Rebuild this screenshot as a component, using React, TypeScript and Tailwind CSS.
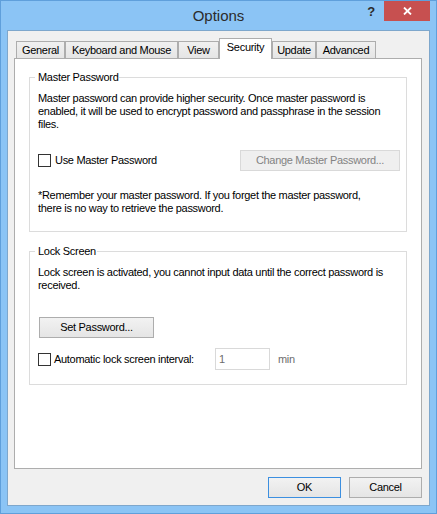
import React, { useState } from "react";

const tabs = [
    { name: "General", w: "w-[49px]" },
    { name: "Keyboard and Mouse", w: "w-[113px]" },
    { name: "View", w: "w-[41px]" },
    { name: "Security", w: "w-[53px]" },
    { name: "Update", w: "w-[44px]" },
    { name: "Advanced", w: "w-[60px]" },
];

const CheckBox: React.FC<{ checked: boolean; onChange: () => void }> = ({ checked, onChange }) => (
    <button
        type="button"
        onClick={onChange}
        className="flex h-[13px] w-[13px] shrink-0 items-center justify-center border border-[#333333] bg-white"
    >
        {checked && (
            <svg width="9" height="9" viewBox="0 0 9 9">
                <path d="M1 4.5 L3.5 7 L8 1.5" fill="none" stroke="#333" strokeWidth="1.5" />
            </svg>
        )}
    </button>
);

export default function App() {
    const [activeTab, setActiveTab] = useState("Security");
    const [useMaster, setUseMaster] = useState(false);
    const [autoLock, setAutoLock] = useState(false);
    const [interval, setInterval] = useState("1");

    return (
        <div className="flex h-[514px] w-[437px] flex-col border border-[#5f9fdb] bg-[#8bc4f5] font-['Liberation_Sans',Arial,sans-serif] text-[11px] leading-[13px] tracking-[-0.3px] text-black">
            {/* title bar */}
            <div className="grid h-[29px] shrink-0 grid-cols-[1fr_auto_1fr]">
                <div />
                <div className="flex items-center pb-px text-[15px] tracking-normal text-[#2b2b2b]">Options</div>
                <div className="flex items-start justify-end pr-[6px]">
                    <span className="mr-[4px] mt-[4px] w-[18px] text-center text-[13px] font-bold leading-[13px] text-[#2b2b2b]">?</span>
                    <button type="button" className="flex h-[20px] w-[46px] items-center justify-center bg-[#c75050]">
                        <svg width="9" height="8" viewBox="0 0 9 8">
                            <path d="M1 0.5 L8 7.5 M8 0.5 L1 7.5" stroke="white" strokeWidth="1.8" />
                        </svg>
                    </button>
                </div>
            </div>

            {/* client */}
            <div className="mx-[6px] mb-[7px] flex flex-1 flex-col border border-[#7ea7cc] bg-[#f0f0f0] pb-[7px] pl-[6px] pr-[7px] pt-[7px]">
                <div className="flex h-[20px] items-end pl-[2px]">
                    {tabs.map(t =>
                        t.name === activeTab ? (
                            <div
                                key={t.name}
                                className={`${t.w} relative z-10 -mb-px flex h-[21px] items-start justify-center border border-b-0 border-[#adadad] bg-white pt-[2px] whitespace-nowrap`}
                            >
                                {t.name}
                            </div>
                        ) : (
                            <button
                                key={t.name}
                                type="button"
                                onClick={() => setActiveTab(t.name)}
                                className={`${t.w} flex h-[17px] items-center justify-center border border-b-0 border-[#adadad] bg-linear-to-b from-[#f0f0f0] to-[#e5e5e5] pt-px whitespace-nowrap`}
                            >
                                {t.name}
                            </button>
                        )
                    )}
                </div>

                <div className="flex-1 border border-[#adadad] bg-white px-[14px] pt-[11px]">
                    <fieldset className="border border-[#dcdcdc] pb-[16px] pl-[8px] pr-[6px]">
                        <legend className="-ml-[3px] pl-[3px] pr-[1px] leading-[14px]">Master Password</legend>
                        <p className="mt-[8px] whitespace-nowrap">
                            Master password can provide higher security. Once master password is
                            <br />
                            enabled, it will be used to encrypt password and passphrase in the session
                            <br />
                            files.
                        </p>
                        <div className="mt-[19px] flex h-[21px] items-center">
                            <CheckBox checked={useMaster} onChange={() => setUseMaster(!useMaster)} />
                            <span className="ml-[4px]">Use Master Password</span>
                            <button
                                type="button"
                                disabled={!useMaster}
                                className="ml-auto h-[21px] w-[160px] border border-[#d9d9d9] bg-[#efefef] text-[#838383]"
                            >
                                Change Master Password...
                            </button>
                        </div>
                        <p className="mt-[18px] whitespace-nowrap">
                            *Remember your master password. If you forget the master password,
                            <br />
                            there is no way to retrieve the password.
                        </p>
                    </fieldset>

                    <fieldset className="mt-[12px] border border-[#dcdcdc] pb-[14px] pl-[8px] pr-[6px]">
                        <legend className="-ml-[3px] pl-[3px] pr-[1px] leading-[14px]">Lock Screen</legend>
                        <p className="mt-[8px] whitespace-nowrap">
                            Lock screen is activated, you cannot input data until the correct password is
                            <br />
                            received.
                        </p>
                        <button
                            type="button"
                            className="ml-px mt-[25px] block h-[21px] w-[115px] border border-[#adadad] bg-linear-to-b from-[#f2f2f2] to-[#e5e5e5]"
                        >
                            Set Password...
                        </button>
                        <div className="mt-[10px] flex h-[22px] items-center">
                            <CheckBox checked={autoLock} onChange={() => setAutoLock(!autoLock)} />
                            <span className="ml-[3px] w-[161px] whitespace-nowrap">Automatic lock screen interval:</span>
                            <input
                                value={interval}
                                disabled={!autoLock}
                                onChange={e => setInterval(e.target.value)}
                                className="h-[22px] w-[55px] border border-[#d9d9d9] bg-white pl-[3px] text-[#6d6d6d] outline-none"
                            />
                            <span className="ml-[8px] text-[#6d6d6d]">min</span>
                        </div>
                    </fieldset>
                </div>

                <div className="mt-[8px] flex justify-end gap-[8px]">
                    <button
                        type="button"
                        className="h-[21px] w-[73px] border border-[#3c8fe0] bg-linear-to-b from-[#f2f2f2] to-[#e5e5e5]"
                    >
                        OK
                    </button>
                    <button
                        type="button"
                        className="h-[21px] w-[73px] border border-[#adadad] bg-linear-to-b from-[#f2f2f2] to-[#e5e5e5]"
                    >
                        Cancel
                    </button>
                </div>
            </div>
        </div>
    );
}
